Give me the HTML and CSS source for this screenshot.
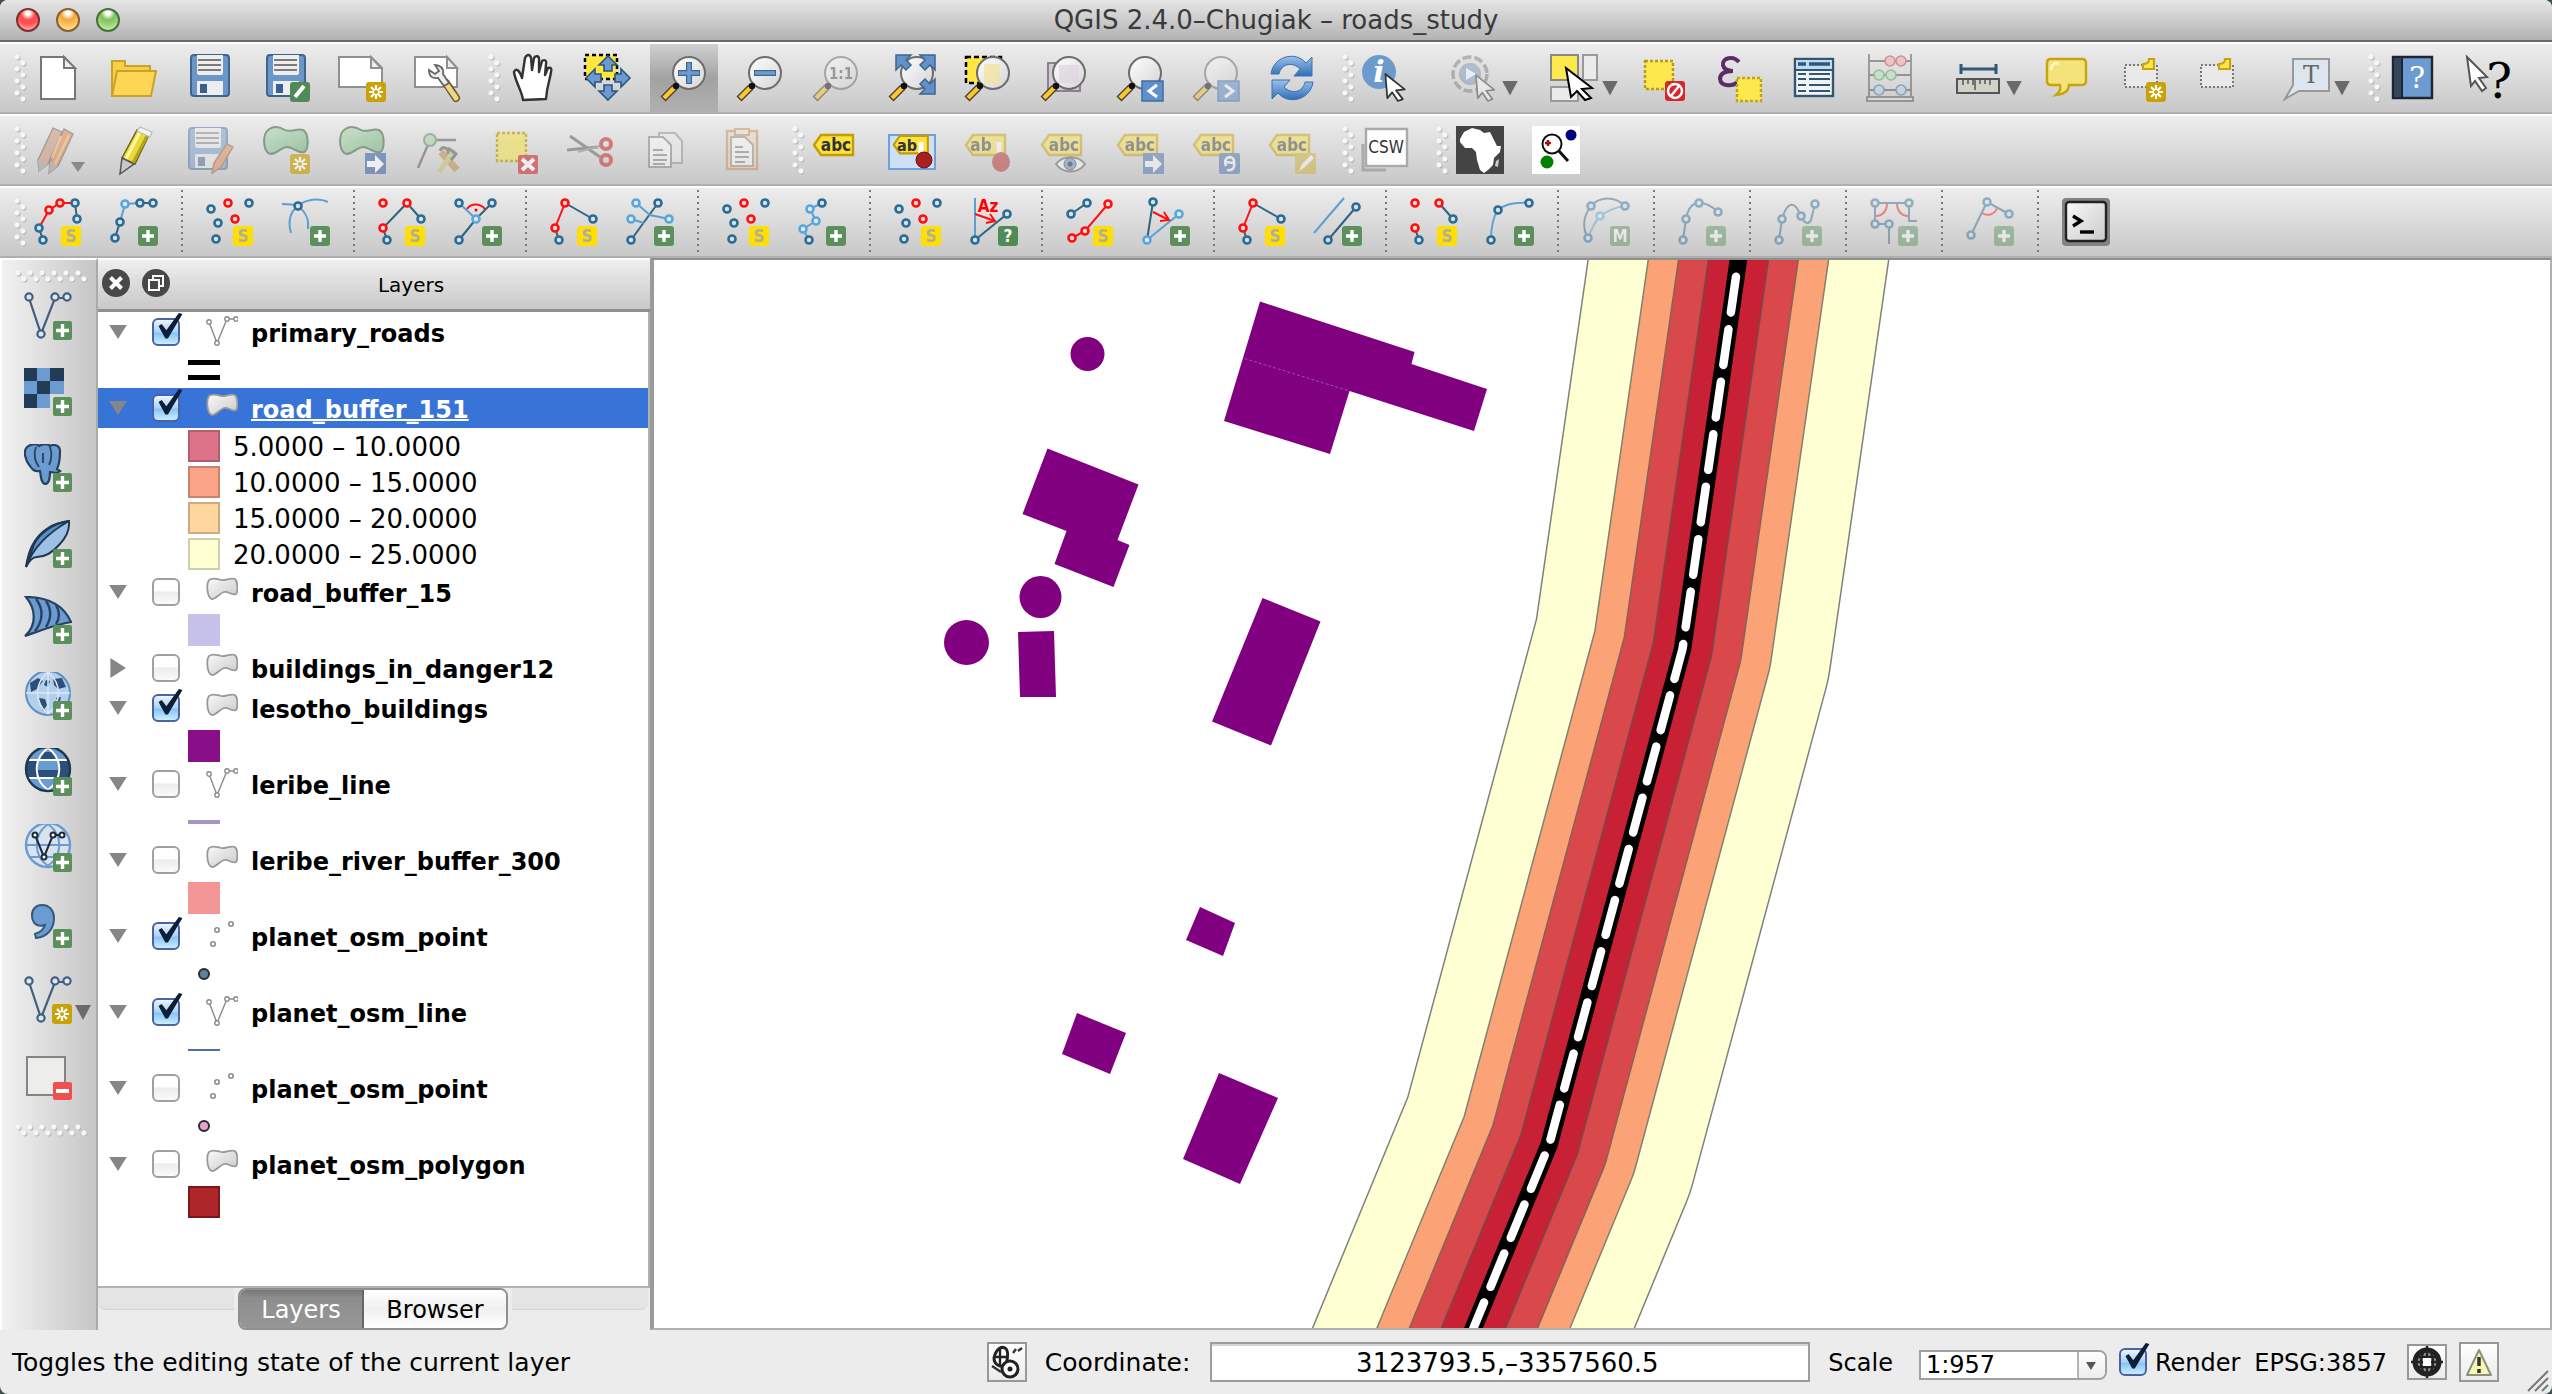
FILE: index.html
```html
<!DOCTYPE html>
<html lang="en">
<head>
<meta charset="utf-8">
<title>QGIS 2.4.0-Chugiak – roads_study</title>
<link rel="stylesheet" href="styles.css">
</head>
<body>
<svg class="defs" aria-hidden="true">
  <defs>
    <linearGradient id="lens" x1="0" y1="0" x2="1" y2="1"><stop offset="0" stop-color="#fff"/><stop offset="1" stop-color="#d4d4d4"/></linearGradient>
    <linearGradient id="steel" x1="0" y1="0" x2="1" y2="1"><stop offset="0" stop-color="#fafafa"/><stop offset="1" stop-color="#c9c9c9"/></linearGradient>
    <linearGradient id="swirl" x1="0" y1="0" x2="0" y2="1"><stop offset="0" stop-color="#9cc0ea"/><stop offset="1" stop-color="#2f6fb8"/></linearGradient>
    <linearGradient id="leaf" x1="0" y1="0" x2="1" y2="1"><stop offset="0" stop-color="#b9deb9"/><stop offset="1" stop-color="#7fb58a"/></linearGradient>
  </defs>
  <symbol id="plus" viewBox="0 0 48 48"><rect x="28" y="28" width="20" height="20" rx="3" fill="#5b8f5b"/><path d="M38 32v12M32 38h12" stroke="#fff" stroke-width="3.400"/></symbol>
  <symbol id="sbadge" viewBox="0 0 48 48"><rect x="27" y="28" width="20" height="20" rx="3" fill="#ffdf00"/></symbol>
  <symbol id="star" viewBox="0 0 48 48"><rect x="28" y="28" width="20" height="20" rx="3" fill="#c9a208"/><path d="M38 31v14M31 38h14M33 33l10 10M43 33l-10 10" stroke="#fff" stroke-width="2.200"/><circle cx="38" cy="38" r="2" fill="#c9a208"/></symbol>
  <symbol id="mag" viewBox="0 0 48 48"><path d="M15 33L3 45" stroke="#4a4030" stroke-width="7"/><path d="M14 34L4 44" stroke="#fcc62d" stroke-width="4.500"/><circle cx="29" cy="19" r="16" fill="url(#lens)" stroke="#6d6d6d" stroke-width="2"/><circle cx="16" cy="32" r="3.200" fill="#111"/></symbol>
  <symbol id="cursor" viewBox="0 0 26 30"><path d="M1 1l20 16-9 1 7 9-5 2-6-9-5 6z" fill="#fff" stroke="#333" stroke-width="1.800" stroke-linejoin="round"/></symbol>
  <symbol id="disk" viewBox="0 0 48 48"><rect x="5" y="1" width="38" height="41" rx="3" fill="#6b96c8" stroke="#3e658f" stroke-width="2"/><path d="M11 1h26v18a2 2 0 0 1-2 2H13a2 2 0 0 1-2-2z" fill="#eee"/><path d="M12 6h23M12 11h23M12 16h23" stroke="#555" stroke-width="1.600"/><rect x="11" y="27" width="26" height="14" fill="#eee"/><rect x="14" y="30" width="7" height="9" fill="#3b5f94"/></symbol>
  <symbol id="tag" viewBox="0 0 48 48"><path d="M2 19L9 9h32v20H9z" fill="#fbe23f" stroke="#c39c00" stroke-width="2.400"/></symbol>
  <symbol id="lump" viewBox="0 0 48 48"><path d="M5 5C11-1 18 1 23 4s12-2 18 0c6 3 6 20 1 22s-11-5-17-5S12 31 6 27C1 22 1 10 5 5z" fill="url(#leaf)" stroke="#55775a" stroke-width="2"/></symbol>
  <symbol id="scatter" viewBox="0 0 48 48"><g class="node"><circle cx="5" cy="11" r="3.500"/><circle cx="43" cy="5" r="3.500"/><circle cx="12" cy="25" r="3.500"/><circle cx="10" cy="41" r="3.500"/></g><g class="node red"><circle cx="22" cy="5" r="3.500"/><circle cx="29" cy="21" r="3.500"/></g><use href="#sbadge"/></symbol>
  <symbol id="trim" viewBox="0 0 48 48"><path class="ln" d="M15 5l28 16M5 30l4 12"/><path class="ln lred" d="M15 5L5 30"/><g class="node"><circle cx="43" cy="21" r="3.500"/><circle cx="9" cy="42" r="3.500"/></g><g class="node red"><circle cx="15" cy="5" r="3.500"/><circle cx="5" cy="30" r="3.500"/></g><use href="#sbadge"/></symbol>
  <symbol id="vee" viewBox="0 0 48 48"><g fill="#dfe8f2" stroke="#41607f" stroke-width="2.200"><path d="M5 6l12 36L31 6h12" fill="none"/><circle cx="5" cy="5" r="3.600"/><circle cx="31" cy="5" r="3.600"/><circle cx="43" cy="5" r="3.600"/><circle cx="17" cy="42" r="3.600"/></g></symbol>
  <symbol id="t-line" viewBox="0 0 32 34"><g fill="#fff" stroke="#8d8d87" stroke-width="1.400"><path d="M3 7l8 21L21 4h8" fill="none"/><circle cx="3" cy="7" r="2.200"/><circle cx="21" cy="4" r="2.200"/><circle cx="30" cy="4" r="2.200"/><circle cx="11" cy="28" r="2.200"/></g></symbol>
  <symbol id="t-poly" viewBox="0 0 32 34"><path d="M3 5c4-3 8-1 12 0s10-3 14-1c3 3 3 13 1 15-3 2-8-3-12-2s-8 7-12 7C1 23 0 9 3 5z" fill="url(#steel)" stroke="#999" stroke-width="1.800"/></symbol>
  <symbol id="t-point" viewBox="0 0 32 34"><g fill="#fff" stroke="#8d8d87" stroke-width="1.600"><circle cx="25" cy="5" r="2.200"/><circle cx="11" cy="11" r="2.200"/><circle cx="7" cy="25" r="2.200"/></g></symbol>
  <symbol id="gbadge" viewBox="0 0 48 48"><rect x="29" y="29" width="19" height="19" rx="2" fill="#5b8f5b"/><path d="M38.500 32v13M32 38.500h13" stroke="#fff" stroke-width="3.400"/></symbol>
</svg>

<div class="window">
  <header class="titlebar">
    <div class="lights"><button class="light close" aria-label="Close"></button><button class="light mini" aria-label="Minimize"></button><button class="light full" aria-label="Zoom"></button></div>
    <h1>QGIS 2.4.0–Chugiak – roads_study</h1>
  </header>

  <div class="toolbar" role="toolbar" aria-label="File and navigation">
    <i class="grip"></i>
    <button aria-label="New"><svg viewBox="0 0 48 48"><path d="M7 3h23l11 12v30H7z" fill="#fff" stroke="#777" stroke-width="2"/><path d="M30 3v11h11z" fill="#eee" stroke="#777" stroke-width="2"/></svg></button>
    <button aria-label="Open"><svg viewBox="0 0 48 48"><path d="M2 41V7h13v5h25v8" fill="#f5cf45" stroke="#c9a22c" stroke-width="2"/><path d="M7 17h39l-5 25H2z" fill="#fdd754" stroke="#c9a22c" stroke-width="2"/></svg></button>
    <button aria-label="Save"><svg viewBox="0 0 48 48"><use href="#disk"/></svg></button>
    <button aria-label="Save as"><svg viewBox="0 0 48 48"><use href="#disk"/><rect x="28" y="28" width="20" height="20" rx="3" fill="#4f8a57"/><path d="M33 43l9-11" stroke="#fff" stroke-width="4"/></svg></button>
    <button aria-label="New composer"><svg viewBox="0 0 48 48"><path d="M1 3h32l11 11v19H1z" fill="#fff" stroke="#909090" stroke-width="2"/><path d="M33 3v11h10z" fill="#eee" stroke="#909090" stroke-width="2"/><use href="#star"/></svg></button>
    <button aria-label="Composer manager"><svg viewBox="0 0 48 48"><path d="M1 3h32l10 11v19H1z" fill="#fff" stroke="#909090" stroke-width="2"/><path d="M33 3v11h10z" fill="#eee" stroke="#909090" stroke-width="2"/><path d="M32 29l10 15" stroke="#6b5724" stroke-width="8" stroke-linecap="round"/><path d="M33 31l9 13" stroke="#ecd68b" stroke-width="5" stroke-linecap="round"/><path d="M21 11c5 0 9 3 8 9l6 9-5 3-6-8c-6 1-9-2-9-8l6 4 4-3z" fill="#eee" stroke="#666" stroke-width="1.800"/></svg></button>
    <i class="grip"></i>
    <button aria-label="Pan map"><svg viewBox="0 0 48 48"><path d="M15 46C14 37 7 27 6 18c2-5 6-1 8 6L17 4c2-4 5-4 6 0l1 12 2-12c2-3 5-2 5 1v13l3-11c3-2 5 0 4 3l-1 11 3-7c3-1 4 1 3 4-1 8-4 13-5 27z" fill="#fff" stroke="#333" stroke-width="2.400" stroke-linejoin="round"/></svg></button>
    <button aria-label="Pan to selection"><svg viewBox="0 0 48 48"><rect x="1" y="1" width="32" height="24" fill="#ffe742" stroke="#000" stroke-width="2.500" stroke-dasharray="4 3"/><g fill="#6b9bd0" stroke="#2d5580" stroke-width="1.600"><path d="M24 2l9 9h-5v6h-8v-6h-5z"/><path d="M24 46l9-9h-5v-6h-8v6h-5z"/><path d="M2 24l9-9v5h6v8h-6v5z"/><path d="M46 24l-9-9v5h-6v8h6v5z"/></g></svg></button>
    <button class="pressed" aria-label="Zoom in" aria-pressed="true"><svg viewBox="0 0 48 48"><use href="#mag"/><path d="M29 8v22M18 19h22" stroke="#3d6590" stroke-width="6"/><path d="M29 9v20M19 19h20" stroke="#6b9bd0" stroke-width="3.600"/></svg></button>
    <button aria-label="Zoom out"><svg viewBox="0 0 48 48"><use href="#mag"/><path d="M18 19h22" stroke="#3d6590" stroke-width="6"/><path d="M19 19h20" stroke="#6b9bd0" stroke-width="3.600"/></svg></button>
    <button disabled aria-label="Zoom to native resolution"><svg viewBox="0 0 48 48"><use href="#mag"/><text x="29" y="25" class="glyph" font-size="15" fill="#555">1:1</text></svg></button>
    <button aria-label="Zoom full"><svg viewBox="0 0 48 48"><use href="#mag"/><g fill="#6492c8" stroke="#3d6590" stroke-width="1.500"><path d="M8 1h15l-5 5 5 5-5 5-5-5-5 5z"/><path d="M47 1v15l-5-5-5 5-5-5 5-5-5-5z"/><path d="M47 40H32l5-5-5-5 5-5 5 5 5-5z"/></g></svg></button>
    <button aria-label="Zoom to selection"><svg viewBox="0 0 48 48"><rect x="2" y="3" width="35" height="26" fill="#ffe742" stroke="#000" stroke-width="2.500" stroke-dasharray="5 3"/><use href="#mag"/><path d="M20 10h16v20H20z" fill="#f1e49a" opacity=".7"/></svg></button>
    <button aria-label="Zoom to layer"><svg viewBox="0 0 48 48"><rect x="8" y="9" width="32" height="28" fill="#d5c9d6" stroke="#8d7f8f" stroke-width="2"/><use href="#mag"/><path d="M19 11h20v18H19z" fill="#ddd6de" opacity=".7"/></svg></button>
    <button aria-label="Zoom last"><svg viewBox="0 0 48 48"><use href="#mag"/><rect x="26" y="27" width="21" height="20" fill="#5f90ca" stroke="#3f6da5" stroke-width="1.500"/><path d="M41 31l-8 6 8 6" fill="none" stroke="#fff" stroke-width="3"/></svg></button>
    <button disabled aria-label="Zoom next"><svg viewBox="0 0 48 48"><use href="#mag"/><rect x="26" y="27" width="21" height="20" fill="#5f90ca" stroke="#3f6da5" stroke-width="1.500"/><path d="M33 31l8 6-8 6" fill="none" stroke="#fff" stroke-width="3"/></svg></button>
    <button aria-label="Refresh"><svg viewBox="0 0 48 48"><g fill="url(#swirl)" stroke="#3a70b0" stroke-width="1"><path d="M3 20C5 3 27-4 38 9l6-6v19H26l6-7C24 7 13 10 11 20z"/><path d="M45 28C43 45 21 52 10 39l-6 6V26h18l-6 7c8 8 19 5 21-5z"/></g></svg></button>
    <i class="grip"></i>
    <button aria-label="Identify"><svg viewBox="0 0 48 48"><circle cx="17" cy="18" r="17" fill="#6c9acb"/><text x="17" y="28" class="glyph info" font-size="30" fill="#fff">i</text><use href="#cursor" x="22" y="19" width="26" height="29"/></svg></button>
    <button class="drop off" disabled aria-label="Run feature action"><svg viewBox="0 0 48 48"><circle cx="20" cy="20" r="17" fill="#ddd" stroke="#777" stroke-width="3.500" stroke-dasharray="9 3"/><circle cx="20" cy="20" r="10" fill="#6c9acb" stroke="#888" stroke-width="2"/><path d="M16 14l10 6-10 6z" fill="#fff"/><use href="#cursor" x="25" y="20" width="24" height="28"/></svg><b class="arrow"></b></button>
    <button class="drop" aria-label="Select features"><svg viewBox="0 0 48 48"><rect x="1" y="1" width="27" height="25" fill="#fde84e" stroke="#888" stroke-width="2"/><path d="M33 1h14v25H33zM1 33h27v14H1z" fill="#ebebeb" stroke="#999" stroke-width="2"/><path d="M16 14l26 20-10 1 9 9-6 2-8-9-6 6z" fill="#fff" stroke="#000" stroke-width="2"/></svg><b class="arrow"></b></button>
    <button aria-label="Deselect features"><svg viewBox="0 0 48 48"><rect x="7" y="7" width="28" height="28" fill="#fde84e" stroke="#b99a10" stroke-width="2.400" stroke-dasharray="3 2"/><rect x="27" y="27" width="20" height="20" rx="3" fill="#d8242a"/><circle cx="37" cy="37" r="7" fill="none" stroke="#fff" stroke-width="2.500"/><path d="M41 32l-8 10" stroke="#fff" stroke-width="2.500"/></svg></button>
    <button aria-label="Select by expression"><svg viewBox="0 0 48 48"><path d="M25 8C19 1 8 4 9 11c1 5 6 6 10 6C12 17 6 19 6 25c1 8 13 8 19 2" fill="none" stroke="#5b2d68" stroke-width="4"/><rect x="23" y="24" width="24" height="23" fill="#fde84e" stroke="#c2a216" stroke-width="2.400" stroke-dasharray="3 2"/></svg></button>
    <button aria-label="Open attribute table"><svg viewBox="0 0 48 48"><rect x="5" y="5" width="38" height="37" fill="#f0f4f7" stroke="#34566f" stroke-width="2.400"/><rect x="6" y="6" width="36" height="9" fill="#b8dcfa"/><path d="M5 16h38" stroke="#34566f" stroke-width="2"/><path d="M8 10h8M19 10h21" stroke="#34566f" stroke-width="3.500"/><path d="M8 20h8M19 20h21M8 25h8M19 25h21M8 31h8M19 31h21M8 37h8M19 37h21" stroke="#34566f" stroke-width="2"/></svg></button>
    <button class="soft" aria-label="Field calculator"><svg viewBox="0 0 48 48"><g fill="none" stroke="#6d6d6d" stroke-width="1.800"><path d="M3 0v43M45 0v43M3 7h42M3 21h42M3 36h42"/><rect x="1" y="43" width="46" height="4" fill="#ddd"/></g><g stroke="#c86464" fill="#edb5b5" stroke-width="1.600"><circle cx="24" cy="7" r="5"/><circle cx="35" cy="7" r="5"/></g><g stroke="#6fae77" fill="#bfe0c2" stroke-width="1.600"><circle cx="13" cy="21" r="5"/><circle cx="25" cy="21" r="5"/></g><g stroke="#5f87ab" fill="#bdd3e6" stroke-width="1.600"><circle cx="13" cy="36" r="5"/><circle cx="35" cy="36" r="5"/></g></svg></button>
    <button class="drop" aria-label="Measure"><svg viewBox="0 0 48 48"><path d="M7 15h35M7 10v10M42 10v10" stroke="#2f5876" stroke-width="3"/><rect x="3" y="25" width="42" height="14" fill="#d0d4c8" stroke="#555" stroke-width="2"/><path d="M9 25v6M14 25v5M19 25v6M26 25v5M31 25v5M36 25v6M21 25v11" stroke="#555" stroke-width="1.500"/></svg><b class="arrow"></b></button>
    <button aria-label="Map tips"><svg viewBox="0 0 48 48"><path d="M8 5h32c3 0 4 2 4 4v18c0 3-1 4-4 4H27c0 5-4 9-13 10 4-3 5-6 4-10H9c-3 0-4-1-4-4V9c0-3 1-4 3-4z" fill="#f4e37a" stroke="#c7a40c" stroke-width="2.400"/><path d="M9 16c0-5 2-7 8-7" stroke="#fdf6c5" stroke-width="3" fill="none"/></svg></button>
    <button aria-label="New bookmark"><svg viewBox="0 0 48 48"><rect x="7" y="11" width="32" height="22" fill="#e9e9e9" stroke="#777" stroke-width="2" stroke-dasharray="2 2"/><path d="M31 5h5v10H25v-5c4 0 6-1 6-5z" fill="#fde84e" stroke="#c7a40c" stroke-width="2.200"/><use href="#star"/></svg></button>
    <button aria-label="Show bookmarks"><svg viewBox="0 0 48 48"><rect x="7" y="11" width="32" height="22" fill="#e9e9e9" stroke="#777" stroke-width="2" stroke-dasharray="2 2"/><path d="M31 5h5v10H25v-5c4 0 6-1 6-5z" fill="#fde84e" stroke="#c7a40c" stroke-width="2.200"/></svg></button>
    <button class="drop" aria-label="Text annotation"><svg viewBox="0 0 48 48"><path d="M11 5h36v32H17L3 45l8-14z" fill="#dde6ee" stroke="#999" stroke-width="2"/><text x="29" y="29" class="glyph serif" font-size="24" fill="#666">T</text></svg><b class="arrow"></b></button>
    <i class="grip"></i>
    <button aria-label="Help"><svg viewBox="0 0 48 48"><path d="M5 3h39v41H5z" fill="#6b9bd0" stroke="#1d2630" stroke-width="2.400"/><path d="M5 3h9v41H5z" fill="#34465a" stroke="#1d2630" stroke-width="2"/><text x="29" y="34" class="glyph serif" font-size="30" fill="#fff">?</text></svg></button>
    <button aria-label="What's this"><svg viewBox="0 0 48 48"><path d="M3 3l20 20-8 1 7 10-4 3-7-10-4 5z" fill="#fff" stroke="#555" stroke-width="2"/><text x="35" y="44" class="glyph serif" font-size="48" fill="#000">?</text></svg></button>
  </div>

  <div class="toolbar" role="toolbar" aria-label="Digitizing and labels">
    <i class="grip"></i>
    <button class="corner off" disabled aria-label="Current edits"><svg viewBox="0 0 48 48"><g stroke="#5b4636" stroke-width="1.300"><path d="M4 34L19 2l9 4-14 32-9 7z" fill="#c98a68"/><path d="M16 36L30 3l9 5-15 32-9 7z" fill="#e2703f"/></g><path d="M27 10l-9 22M35 9L21 38" stroke="#f0b24e" stroke-width="2.500"/><path d="M4 34l10 4-9 8zM16 36l8 4-9 7z" fill="#999"/></svg><b class="arrow small"></b></button>
    <button aria-label="Toggle editing"><svg viewBox="0 0 48 48"><path d="M12 32L27 4l12 5-14 29z" fill="#e9da3c" stroke="#6b651b" stroke-width="1.500"/><path d="M30 6L16 33" stroke="#fff7a0" stroke-width="3"/><path d="M37 10L23 37" stroke="#b3a51c" stroke-width="3"/><path d="M12 32l12 6-14 10z" fill="#c9c9c9" stroke="#555" stroke-width="1.500"/><path d="M27 5l3-4 12 5-2 5z" fill="#f4f4f4" stroke="#bbb" stroke-width="1.200"/></svg></button>
    <button class="off" disabled aria-label="Save layer edits"><svg viewBox="0 0 48 48"><use href="#disk" x="-2" y="1"/><path d="M28 37l13-19 6 3-12 20-9 6z" fill="#e8854a" stroke="#8a5a3a" stroke-width="1.500"/></svg></button>
    <button class="soft" disabled aria-label="Add feature"><svg viewBox="0 0 48 48"><use href="#lump"/><use href="#star"/></svg></button>
    <button class="soft" disabled aria-label="Move feature"><svg viewBox="0 0 48 48"><use href="#lump"/><rect x="27" y="27" width="21" height="21" fill="#4f74ad"/><path d="M29 35h8v-6l9 9-9 9v-6h-8z" fill="#fff"/></svg></button>
    <button class="off" disabled aria-label="Node tool"><svg viewBox="0 0 48 48"><path d="M4 42L16 14h26" fill="none" stroke="#444" stroke-width="2.400"/><circle cx="16" cy="14" r="6" fill="#9fce9f" stroke="#4a7a4a" stroke-width="2"/><path d="M27 26L43 44" stroke="#c08030" stroke-width="7"/><path d="M41 24L25 46" stroke="#c9c058" stroke-width="5"/><path d="M26 25c3-6 9-3 8 3M34 22l8 6-5 6" fill="none" stroke="#444" stroke-width="3"/></svg></button>
    <button class="soft" disabled aria-label="Delete selected"><svg viewBox="0 0 48 48"><rect x="7" y="7" width="29" height="28" fill="#f3e263" stroke="#b99a10" stroke-width="2.400" stroke-dasharray="3 2"/><rect x="28" y="29" width="20" height="19" rx="2" fill="#d03c40"/><path d="M32 33l12 11M44 33L32 44" stroke="#fff" stroke-width="4"/></svg></button>
    <button class="soft" disabled aria-label="Cut"><svg viewBox="0 0 48 48"><path d="M4 10l30 21M1 24l31-3" stroke="#777" stroke-width="3"/><path d="M12 26l22-6" stroke="#999" stroke-width="2"/><g fill="none" stroke="#c84848" stroke-width="4"><circle cx="40" cy="18" r="5"/><circle cx="40" cy="34" r="5"/></g></svg></button>
    <button class="off" disabled aria-label="Copy"><svg viewBox="0 0 48 48"><path d="M17 7h16l7 8v22H17z" fill="#eee" stroke="#888" stroke-width="2"/><path d="M7 11h14l8 8v22H7z" fill="#fff" stroke="#777" stroke-width="2"/><path d="M11 24h10M11 29h14M11 34h14M11 38h12" stroke="#777" stroke-width="2"/></svg></button>
    <button class="off" disabled aria-label="Paste"><svg viewBox="0 0 48 48"><rect x="9" y="5" width="30" height="38" fill="#f0d8b8" stroke="#c08848" stroke-width="2.400"/><path d="M13 11h14l8 8v21H13z" fill="#fff" stroke="#888" stroke-width="2"/><path d="M17 21h8M17 26h14M17 31h14M17 36h10" stroke="#777" stroke-width="2"/><rect x="17" y="3" width="14" height="6" fill="#f4e4cc" stroke="#c08848" stroke-width="2"/></svg></button>
    <i class="grip"></i>
    <button aria-label="Label layer"><svg viewBox="0 0 48 48"><use href="#tag"/><text x="24" y="25" class="glyph" font-size="17" fill="#333">abc</text></svg></button>
    <button aria-label="Highlight pinned labels"><svg viewBox="0 0 48 48"><rect x="1" y="9" width="46" height="34" fill="#cfe0f5" stroke="#6f9fdd" stroke-width="2"/><use href="#tag" x="4" y="2" width="42" height="42"/><text x="19" y="25" class="glyph" font-size="16" fill="#333">ab</text><path d="M33 16v12" stroke="#fff" stroke-width="5"/><circle cx="36" cy="34" r="8" fill="#a8201f" stroke="#701010"/></svg></button>
    <button class="off" disabled aria-label="Pin labels"><svg viewBox="0 0 48 48"><use href="#tag"/><text x="17" y="25" class="glyph" font-size="17" fill="#333">ab</text><path d="M35 16v12" stroke="#fff" stroke-width="5"/><ellipse cx="37" cy="36" rx="9" ry="10" fill="#b82020"/></svg></button>
    <button class="off" disabled aria-label="Show labels"><svg viewBox="0 0 48 48"><use href="#tag"/><text x="24" y="25" class="glyph" font-size="17" fill="#333">abc</text><path d="M16 38c7-9 22-9 29 0-7 10-22 10-29 0z" fill="#fff" stroke="#555" stroke-width="2"/><circle cx="30" cy="38" r="6" fill="#5f90ca" stroke="#333"/><circle cx="30" cy="38" r="2.500" fill="#111"/></svg></button>
    <button class="off" disabled aria-label="Move label"><svg viewBox="0 0 48 48"><use href="#tag"/><text x="24" y="25" class="glyph" font-size="17" fill="#333">abc</text><rect x="27" y="27" width="21" height="21" fill="#3e69ad"/><path d="M29 35h8v-6l9 9-9 9v-6h-8z" fill="#fff"/></svg></button>
    <button class="off" disabled aria-label="Rotate label"><svg viewBox="0 0 48 48"><use href="#tag"/><text x="24" y="25" class="glyph" font-size="17" fill="#333">abc</text><rect x="27" y="27" width="21" height="21" rx="2" fill="#3e69ad"/><path d="M34 40c-4-9 7-12 8-5s-1 10-7 9M34 36l7 1" fill="none" stroke="#fff" stroke-width="2.600"/></svg></button>
    <button class="off" disabled aria-label="Change label"><svg viewBox="0 0 48 48"><use href="#tag"/><text x="24" y="25" class="glyph" font-size="17" fill="#333">abc</text><rect x="27" y="27" width="21" height="21" fill="#cfb02b"/><path d="M31 45l3-7 9-9 3 3-9 9z" fill="#fff"/></svg></button>
    <i class="grip"></i>
    <button aria-label="Catalogue search"><svg viewBox="0 0 48 48"><path d="M1 18v26h23" fill="none" stroke="#aaa" stroke-width="3"/><rect x="4" y="3" width="41" height="37" fill="#fff" stroke="#aaa" stroke-width="2.400"/><text x="24" y="27" class="glyph thin" font-size="17" fill="#333">CSW</text></svg></button>
    <i class="grip"></i>
    <button aria-label="OpenStreetMap Africa"><svg viewBox="0 0 48 48"><path fill="#444" d="M0 0h48v48H0z"/><path d="M8 6l8-4 8 2 4 3 6-1 4 8 3 6h4l-1 6-6 6-1 7-5 5-4 3-4-3-3-10-1-8-4-4H9l-5-6V13z" fill="#fff"/><path d="M43 33l-1 8-3-1 1-5z" fill="#ccc"/></svg></button>
    <button aria-label="Road graph"><svg viewBox="0 0 48 48"><path fill="#fff" d="M0 0h48v48H0z"/><circle cx="20" cy="18" r="9.500" fill="#fff" stroke="#111" stroke-width="2"/><path d="M27 25l9 10" stroke="#111" stroke-width="3"/><path d="M16 14v6M13 17h6" stroke="#a01010" stroke-width="2.500"/><circle cx="39" cy="9" r="5.500" fill="#000080"/><circle cx="15" cy="36" r="6.500" fill="#008000"/></svg></button>
  </div>

  <div class="toolbar last" role="toolbar" aria-label="CAD tools">
    <i class="grip"></i>
    <button aria-label="Select arc"><svg viewBox="0 0 48 48"><path class="ln" d="M5 30l4 12M41 5l2 16"/><path class="ln lred" d="M5 30l10-18L26 5h15"/><g class="node"><circle cx="5" cy="30" r="3.500"/><circle cx="9" cy="42" r="3.500"/><circle cx="41" cy="5" r="3.500"/><circle cx="43" cy="21" r="3.500"/></g><g class="node red"><circle cx="15" cy="12" r="3.500"/><circle cx="26" cy="5" r="3.500"/></g><use href="#sbadge"/><text x="37" y="44" class="glyph ess">S</text></svg></button>
    <button aria-label="Extend line"><svg viewBox="0 0 48 48"><path class="ln" d="M5 40l5-16M30 5h13"/><path class="ln llt" d="M10 24l5-18 15-1"/><g class="node"><circle cx="5" cy="40" r="3.500"/><circle cx="10" cy="24" r="3.500"/><circle cx="30" cy="5" r="3.500"/><circle cx="43" cy="5" r="3.500"/></g><g class="node lt"><circle cx="15" cy="6" r="3.500"/></g><use href="#plus"/></svg></button>
    <i class="sep"></i>
    <button aria-label="Select points"><svg viewBox="0 0 48 48"><use href="#scatter"/><text x="37" y="44" class="glyph ess">S</text></svg></button>
    <button aria-label="Intersection"><svg viewBox="0 0 48 48"><path class="ln llt" d="M0 6l16 1C24 2 36-1 46 4M16 8C8 14 6 24 9 35M16 8c9 7 11 14 10 23"/><g class="node"><circle cx="16" cy="8" r="3.500"/></g><use href="#plus"/></svg></button>
    <i class="sep"></i>
    <button aria-label="Select vertices"><svg viewBox="0 0 48 48"><path class="ln" d="M43 21L29 5 5 30l4 12"/><g class="node"><circle cx="43" cy="21" r="3.500"/><circle cx="9" cy="42" r="3.500"/></g><g class="node red"><circle cx="5" cy="5" r="3.500"/><circle cx="29" cy="5" r="3.500"/><circle cx="5" cy="30" r="3.500"/></g><use href="#sbadge"/><text x="37" y="44" class="glyph ess">S</text></svg></button>
    <button aria-label="Bisector"><svg viewBox="0 0 48 48"><path class="ln" d="M38 5L22 21 5 42"/><path class="ln llt" d="M5 5l17 16"/><path class="ln lred" d="M13 11c4-6 13-6 18 0"/><circle cx="22" cy="12" r="1.500" fill="red"/><g class="node"><circle cx="5" cy="5" r="3.500"/><circle cx="38" cy="5" r="3.500"/><circle cx="5" cy="42" r="3.500"/></g><g class="node lt"><circle cx="22" cy="21" r="3.500"/></g><use href="#plus"/></svg></button>
    <i class="sep"></i>
    <button aria-label="Select segment"><svg viewBox="0 0 48 48"><use href="#trim"/><text x="37" y="44" class="glyph ess">S</text></svg></button>
    <button aria-label="Perpendicular"><svg viewBox="0 0 48 48"><path class="ln" d="M5 42L32 5"/><path class="ln llt" d="M10 5l14 12 19 4M5 21l13 4"/><g class="node"><circle cx="32" cy="5" r="3.500"/><circle cx="5" cy="42" r="3.500"/></g><g class="node lt"><circle cx="10" cy="5" r="3.500"/><circle cx="5" cy="21" r="3.500"/><circle cx="43" cy="21" r="3.500"/></g><use href="#plus"/></svg></button>
    <i class="sep"></i>
    <button aria-label="Select points"><svg viewBox="0 0 48 48"><use href="#scatter"/><text x="37" y="44" class="glyph ess">S</text></svg></button>
    <button aria-label="Traverse"><svg viewBox="0 0 48 48"><path class="ln llt" d="M24 5l-12 6 6 12-13 8 6 11"/><g class="node"><circle cx="24" cy="5" r="3.500"/><circle cx="11" cy="42" r="3.500"/></g><g class="node lt"><circle cx="12" cy="11" r="3.500"/><circle cx="18" cy="23" r="3.500"/><circle cx="5" cy="31" r="3.500"/></g><use href="#plus"/></svg></button>
    <i class="sep"></i>
    <button aria-label="Select points"><svg viewBox="0 0 48 48"><use href="#scatter"/><text x="37" y="44" class="glyph ess">S</text></svg></button>
    <button aria-label="Azimuth"><svg viewBox="0 0 48 48"><path class="ln llt" d="M5 0v42"/><path class="ln" d="M5 42l32-26"/><g class="node"><circle cx="5" cy="42" r="3.500"/><circle cx="37" cy="16" r="3.500"/></g><path class="ln lred" d="M5 16l20 7M20 16l5 7-9 2"/><text x="18" y="14" class="glyph" font-size="17" fill="red">Az</text><rect x="28" y="28" width="20" height="20" rx="3" fill="#4f8a57"/><text x="38" y="44" class="glyph" font-size="17" fill="#fff">?</text></svg></button>
    <i class="sep"></i>
    <button aria-label="Select two segments"><svg viewBox="0 0 48 48"><path class="ln" d="M21 5L5 16"/><path class="ln lred" d="M42 6L19 33 6 40"/><g class="node"><circle cx="21" cy="5" r="3.500"/><circle cx="5" cy="16" r="3.500"/></g><g class="node red"><circle cx="42" cy="6" r="3.500"/><circle cx="19" cy="33" r="3.500"/><circle cx="6" cy="40" r="3.500"/></g><use href="#sbadge"/><text x="37" y="44" class="glyph ess">S</text></svg></button>
    <button aria-label="Rotate"><svg viewBox="0 0 48 48"><path class="ln" d="M11 4L5 42"/><path class="ln llt" d="M5 42l32-26"/><g class="node"><circle cx="11" cy="4" r="3.500"/></g><g class="node lt"><circle cx="5" cy="42" r="3.500"/><circle cx="37" cy="16" r="3.500"/></g><path class="ln lred" d="M11 14l16 8M22 14l5 8-9 1"/><use href="#plus"/></svg></button>
    <i class="sep"></i>
    <button aria-label="Select segment"><svg viewBox="0 0 48 48"><use href="#trim"/><text x="37" y="44" class="glyph ess">S</text></svg></button>
    <button aria-label="Parallel"><svg viewBox="0 0 48 48"><path class="ln llt" d="M30 0L0 35"/><path class="ln" d="M42 9L14 42"/><g class="node"><circle cx="42" cy="9" r="3.500"/><circle cx="14" cy="42" r="3.500"/></g><use href="#plus"/></svg></button>
    <i class="sep"></i>
    <button aria-label="Select three points"><svg viewBox="0 0 48 48"><path class="ln" d="M29 5l14 16M5 30l4 12"/><g class="node"><circle cx="43" cy="21" r="3.500"/><circle cx="9" cy="42" r="3.500"/></g><g class="node red"><circle cx="5" cy="5" r="3.500"/><circle cx="29" cy="5" r="3.500"/><circle cx="5" cy="30" r="3.500"/></g><use href="#sbadge"/><text x="37" y="44" class="glyph ess">S</text></svg></button>
    <button aria-label="Arc"><svg viewBox="0 0 48 48"><path class="ln llt" d="M5 42c0-12 2-23 7-30C19 6 30 4 43 5"/><g class="node"><circle cx="43" cy="5" r="3.500"/><circle cx="12" cy="12" r="3.500"/><circle cx="5" cy="42" r="3.500"/></g><use href="#plus"/></svg></button>
    <i class="sep"></i>
    <button class="off" disabled aria-label="Modify circle"><svg viewBox="0 0 48 48"><path class="ln" d="M6 40C0 30 1 18 9 8 18-2 33-2 43 8"/><path class="ln llt" d="M6 40c3-8 7-16 12-22 7-5 15-9 25-10"/><g class="node"><circle cx="9" cy="8" r="3.500"/><circle cx="43" cy="8" r="3.500"/><circle cx="6" cy="40" r="3.500"/></g><g class="node lt"><circle cx="18" cy="18" r="3.500"/></g><rect x="28" y="28" width="20" height="20" rx="3" fill="#5b8f5b"/><text x="38" y="44" class="glyph" font-size="17" fill="#fff">M</text></svg></button>
    <i class="sep"></i>
    <button class="off" disabled aria-label="Curve"><svg viewBox="0 0 48 48"><path class="ln" d="M5 42l3-21C10 10 14 5 21 5s13 3 19 9"/><g class="node"><circle cx="5" cy="42" r="3.500"/><circle cx="8" cy="21" r="3.500"/><circle cx="21" cy="5" r="3.500"/><circle cx="40" cy="14" r="3.500"/></g><use href="#plus"/></svg></button>
    <i class="sep"></i>
    <button class="off" disabled aria-label="Spline"><svg viewBox="0 0 48 48"><path class="ln" d="M5 42l3-21C11 11 15 6 19 7s6 7 8 11c4 9 8 8 10 4l4-16"/><g class="node"><circle cx="5" cy="42" r="3.500"/><circle cx="8" cy="21" r="3.500"/><circle cx="27" cy="18" r="3.500"/><circle cx="41" cy="6" r="3.500"/></g><use href="#plus"/></svg></button>
    <i class="sep"></i>
    <button class="off" disabled aria-label="Orthogonal"><svg viewBox="0 0 48 48"><path class="ln" d="M19 46V26H5V5h34v18h8"/><path class="ln lred" d="M17 6c0 6-4 12-11 12M27 6c0 6 4 12 11 12"/><g class="node"><circle cx="5" cy="5" r="3.500"/><circle cx="39" cy="5" r="3.500"/><circle cx="5" cy="26" r="3.500"/><circle cx="19" cy="26" r="3.500"/></g><use href="#plus"/></svg></button>
    <i class="sep"></i>
    <button class="off" disabled aria-label="Angle"><svg viewBox="0 0 48 48"><path class="ln" d="M5 37L21 4l22 12"/><path class="ln lred" d="M16 15c6 4 13 1 15-5"/><g class="node"><circle cx="21" cy="4" r="3.500"/><circle cx="43" cy="16" r="3.500"/><circle cx="5" cy="37" r="3.500"/></g><use href="#plus"/></svg></button>
    <i class="sep"></i>
    <button aria-label="Console"><svg viewBox="0 0 48 48"><rect width="48" height="48" rx="4" fill="#83837f"/><rect x="4" y="4" width="40" height="39" rx="3" fill="url(#steel)" stroke="#222" stroke-width="2.400"/><path d="M11 18l8 5-8 5" fill="none" stroke="#000" stroke-width="3.400"/><path d="M18 34h14" stroke="#000" stroke-width="3.400"/></svg></button>
  </div>

  <main>
    <div class="sidebar" role="toolbar" aria-label="Manage layers">
      <i class="grip"></i>
      <button aria-label="Add vector layer"><svg viewBox="0 0 48 48"><use href="#vee"/><use href="#gbadge"/></svg></button>
      <button aria-label="Add raster layer"><svg viewBox="0 0 48 48"><path fill="#6b9bd0" d="M0 0h40v26H26v14H0z"/><path d="M0 0h13v13H0zM26 0h14v13H26zM13 13h13v13H13zM0 26h13v14H0z" fill="#223b59"/><use href="#gbadge"/></svg></button>
      <button aria-label="Add PostGIS layer"><svg viewBox="0 0 48 48"><path d="M3 3c5-4 10-3 12-1 4-3 10-2 11 0 4-2 10-1 10 5 0 7-1 14-3 18l3 2-3 2-7-1c0 7-1 12-5 12-4-1-4-7-5-13-6 1-8-2-10-5C1 16-1 7 3 3z" fill="#6b9bd0" stroke="#274260" stroke-width="2.200"/><path d="M12 3c-3 7-1 15 3 20M26 3c2 6 2 12-1 18M19 9v10" fill="none" stroke="#274260" stroke-width="1.800"/><use href="#gbadge"/></svg></button>
      <button aria-label="Add SpatiaLite layer"><svg viewBox="0 0 48 48"><path d="M2 47C4 34 8 18 24 8 30 4 38 2 45 1c1 10-4 18-10 24-7 8-14 12-22 12-5 0-8 4-11 10z" fill="#9cc0e6" stroke="#1f3852" stroke-width="2"/><path d="M2 47C8 30 22 14 45 1 30 3 12 14 8 30z" fill="#5d8fc4" stroke="#1f3852" stroke-width="2"/><use href="#gbadge"/></svg></button>
      <button aria-label="Add MSSQL layer"><svg viewBox="0 0 48 48"><path d="M2 1c18 0 36 5 45 25-18 3-34 10-46 14 12-11 11-27 1-39z" fill="#6b9bd0" stroke="#274260" stroke-width="2.200"/><path d="M12 3c8 10 7 22-1 32M22 5c6 9 5 18 0 26M32 9c4 7 4 13 0 19" fill="none" stroke="#274260" stroke-width="2.400"/><use href="#gbadge"/></svg></button>
      <button aria-label="Add WMS layer"><svg viewBox="0 0 48 48"><circle cx="24" cy="21" r="22" fill="#b4cfec" stroke="#5d8fc4" stroke-width="2"/><path d="M6 11l8-5 5 3-6 8-6 3zM22 8l4 1-2 6-4-2zM29 7l9-1 4 9-8 2-4-4zM15 26l6 1 2 6-4 6zM32 26l5-1-2 7z" fill="#2c4f79"/><path d="M2 21h44M24 0v42M24 0c-14 12-14 30 0 42M24 0c14 12 14 30 0 42" stroke="#dce9f7" stroke-width="1.500" fill="none"/><use href="#gbadge"/></svg></button>
      <button aria-label="Add WCS layer"><svg viewBox="0 0 48 48"><circle cx="24" cy="21" r="22" fill="#6b9bd0"/><path d="M3 12h11v18H3zM34 12h11v18H34zM14 22h20v8H14zM20 4h8l4 7H16z" fill="#2c4f79"/><path d="M2 30h44M3 12h42M24 0C8 12 10 32 24 42M24 0c16 12 14 32 0 42" stroke="#fff" stroke-width="2" fill="none"/><circle cx="24" cy="21" r="22" fill="none" stroke="#1f3852" stroke-width="2.400"/><use href="#gbadge"/></svg></button>
      <button aria-label="Add WFS layer"><svg viewBox="0 0 48 48"><circle cx="24" cy="21" r="22" fill="#d9e3ee" stroke="#6b9bd0" stroke-width="2.400"/><path d="M2 21h44M6 33h36M24 0C8 12 10 32 24 42M24 0c16 12 14 32 0 42" stroke="#6b9bd0" stroke-width="2" fill="none"/><path d="M11 11l9 22 9-22h9" fill="none" stroke="#1b2a3b" stroke-width="2"/><g fill="#fff" stroke="#1b2a3b" stroke-width="2"><circle cx="11" cy="11" r="2.500"/><circle cx="29" cy="11" r="2.500"/><circle cx="38" cy="11" r="2.500"/><circle cx="20" cy="33" r="2.500"/></g><use href="#gbadge"/></svg></button>
      <button aria-label="Add delimited text layer"><svg viewBox="0 0 48 48"><path d="M18 5c8 0 12 6 12 13 0 10-6 19-18 20l-1-4c6-2 9-5 10-9C12 28 8 22 8 15 8 9 12 5 18 5z" fill="#6b9bd0" stroke="#34597f" stroke-width="2"/><use href="#gbadge"/></svg></button>
      <button class="corner" aria-label="New shapefile layer"><svg viewBox="0 0 48 48"><use href="#vee"/><use href="#star"/></svg><b class="arrow"></b></button>
      <button aria-label="Remove layer"><svg viewBox="0 0 48 48"><rect x="3" y="5" width="38" height="38" fill="#ededeb" stroke="#85857f" stroke-width="2"/><rect x="29" y="30" width="19" height="18" rx="2" fill="#f0504e"/><path d="M32 39h13" stroke="#fff" stroke-width="4"/></svg></button>
      <i class="grip end"></i>
    </div>

    <section class="dock">
      <header>
        <button aria-label="Close panel"><svg viewBox="0 0 28 28"><circle cx="14" cy="14" r="14" fill="#484848"/><path d="M8.500 8.500l11 11M19.500 8.500l-11 11" stroke="#fff" stroke-width="4"/></svg></button>
        <button aria-label="Float panel"><svg viewBox="0 0 28 28"><circle cx="14" cy="14" r="14" fill="#484848"/><path d="M11 11V7h10v10h-4" fill="none" stroke="#fff" stroke-width="2"/><rect x="7" y="11" width="10" height="10" fill="none" stroke="#fff" stroke-width="2"/></svg></button>
        <h2>Layers</h2>
      </header>
      <ul class="tree">
        <li><div class="layer"><button class="open" aria-label="Collapse"></button><input type="checkbox" id="l1" checked><svg viewBox="0 0 32 34"><use href="#t-line"/></svg><label for="l1">primary_roads</label></div>
          <div class="legend"><span class="road"></span></div></li>
        <li><div class="layer selected"><button class="open" aria-label="Collapse"></button><input type="checkbox" id="l2" checked><svg viewBox="0 0 32 34"><use href="#t-poly"/></svg><label for="l2">road_buffer_151</label></div>
          <div class="legend"><span class="swatch c1"></span><span>5.0000 – 10.0000</span></div>
          <div class="legend"><span class="swatch c2"></span><span>10.0000 – 15.0000</span></div>
          <div class="legend"><span class="swatch c3"></span><span>15.0000 – 20.0000</span></div>
          <div class="legend"><span class="swatch c4"></span><span>20.0000 – 25.0000</span></div></li>
        <li><div class="layer"><button class="open" aria-label="Collapse"></button><input type="checkbox" id="l3"><svg viewBox="0 0 32 34"><use href="#t-poly"/></svg><label for="l3">road_buffer_15</label></div>
          <div class="legend"><span class="swatch lilac"></span></div></li>
        <li><div class="layer"><button class="shut" aria-label="Expand"></button><input type="checkbox" id="l4"><svg viewBox="0 0 32 34"><use href="#t-poly"/></svg><label for="l4">buildings_in_danger12</label></div></li>
        <li><div class="layer"><button class="open" aria-label="Collapse"></button><input type="checkbox" id="l5" checked><svg viewBox="0 0 32 34"><use href="#t-poly"/></svg><label for="l5">lesotho_buildings</label></div>
          <div class="legend"><span class="swatch purple"></span></div></li>
        <li><div class="layer"><button class="open" aria-label="Collapse"></button><input type="checkbox" id="l6"><svg viewBox="0 0 32 34"><use href="#t-line"/></svg><label for="l6">leribe_line</label></div>
          <div class="legend"><span class="stroke violet"></span></div></li>
        <li><div class="layer"><button class="open" aria-label="Collapse"></button><input type="checkbox" id="l7"><svg viewBox="0 0 32 34"><use href="#t-poly"/></svg><label for="l7">leribe_river_buffer_300</label></div>
          <div class="legend"><span class="swatch pink"></span></div></li>
        <li><div class="layer"><button class="open" aria-label="Collapse"></button><input type="checkbox" id="l8" checked><svg viewBox="0 0 32 34"><use href="#t-point"/></svg><label for="l8">planet_osm_point</label></div>
          <div class="legend"><span class="dot teal"></span></div></li>
        <li><div class="layer"><button class="open" aria-label="Collapse"></button><input type="checkbox" id="l9" checked><svg viewBox="0 0 32 34"><use href="#t-line"/></svg><label for="l9">planet_osm_line</label></div>
          <div class="legend"><span class="stroke blue"></span></div></li>
        <li><div class="layer"><button class="open" aria-label="Collapse"></button><input type="checkbox" id="l10"><svg viewBox="0 0 32 34"><use href="#t-point"/></svg><label for="l10">planet_osm_point</label></div>
          <div class="legend"><span class="dot rose"></span></div></li>
        <li><div class="layer"><button class="open" aria-label="Collapse"></button><input type="checkbox" id="l11"><svg viewBox="0 0 32 34"><use href="#t-poly"/></svg><label for="l11">planet_osm_polygon</label></div>
          <div class="legend"><span class="swatch brick"></span></div></li>
      </ul>
      <div class="tabs" role="tablist">
        <i></i>
        <div><button role="tab" aria-selected="true">Layers</button><button role="tab" aria-selected="false">Browser</button></div>
        <i></i>
      </div>
    </section>

    <div class="map">
      <svg viewBox="654 260 1896 1068" preserveAspectRatio="xMidYMid slice" role="img" aria-label="Roads, buffers and buildings">
        <g fill="#800080">
          <circle cx="1087.500" cy="354" r="17"/><circle cx="1040.500" cy="597" r="21"/><circle cx="966.500" cy="642.500" r="22.500"/>
          <path d="M1260 301.500L1414.500 352l-3 12L1487 389l-13 42-124.500-40-19.500 63-106-33z"/>
          <path d="M1047.500 448.500l91 36-21 55.500 12 5-16 42-59-23 12-33-44-17z"/>
          <path d="M1018 632l36-1 2 66h-36zM1262.500 598l58 23.500-49.500 124-59-24zM1200 907l35 16-12 33-37-16zM1077 1013l49 20-16 41-48-20zM1219 1073l59 25-38 86-57-25z"/>
        </g>
        <path d="M1244.500 358.500l105 32.500" stroke="#a050a0" stroke-width="1" stroke-dasharray="3 2"/>
        <g fill="none" stroke-linejoin="round">
          <path class="edge" stroke-width="299" d="M1747 200L1682.500 649 1549 1145 1443 1402"/><path stroke="#ffffd4" stroke-width="296" d="M1747 200L1682.500 649 1549 1145 1443 1402"/>
          <path class="edge" stroke-width="180" d="M1747 200L1682.500 649 1549 1145 1443 1402"/><path stroke="#fba377" stroke-width="177" d="M1747 200L1682.500 649 1549 1145 1443 1402"/>
          <path class="edge" stroke-width="120" d="M1747 200L1682.500 649 1549 1145 1443 1402"/><path stroke="#d9494b" stroke-width="117" d="M1747 200L1682.500 649 1549 1145 1443 1402"/>
          <path class="edge" stroke-width="61" d="M1747 200L1682.500 649 1549 1145 1443 1402"/><path stroke="#c82034" stroke-width="58" d="M1747 200L1682.500 649 1549 1145 1443 1402"/>
          <path stroke="#000" stroke-width="17.500" d="M1747 200L1682.500 649 1549 1145 1443 1402"/>
          <path stroke="#fff" stroke-width="8.500" stroke-linecap="round" stroke-dasharray="36 17" stroke-dashoffset="36" d="M1738.400 260L1682.500 649 1549 1145 1443 1402"/>
        </g>
      </svg>
    </div>
  </main>

  <footer>
    <p>Toggles the editing state of the current layer</p>
    <button aria-label="Toggle extents and mouse position"><svg viewBox="0 0 36 36"><path d="M5 14C7 5 12 2 16 4s3 9 1 17c-5 3-12 0-12-7z" fill="#fff" stroke="#222" stroke-width="3"/><path d="M11 3v18M5 13h13" stroke="#222" stroke-width="2.400"/><circle cx="21" cy="25" r="8" fill="#fff" stroke="#222" stroke-width="3"/><circle cx="21" cy="25" r="2.500" fill="#222"/><path d="M24 9l3-4M29 7l4-3M3 22l9 6" stroke="#333" stroke-width="2.400"/></svg></button>
    <label for="coord">Coordinate:</label>
    <input id="coord" type="text" value="3123793.5,–3357560.5">
    <label class="sm" for="scale">Scale</label>
    <span class="combo"><select id="scale"><option>1:957</option></select></span>
    <span class="render"><input type="checkbox" id="render" checked><label class="sm" for="render">Render</label></span>
    <span class="sm epsg">EPSG:3857</span>
    <button class="crs" aria-label="CRS status"><svg viewBox="0 0 36 32"><circle cx="18" cy="16" r="12" fill="#999" stroke="#222" stroke-width="5"/><ellipse cx="18" cy="16" rx="6" ry="12" fill="none" stroke="#222" stroke-width="2.400"/><path d="M5 11h26M5 21h26M18 0v32M2 16h32" stroke="#222" stroke-width="2.400"/><rect x="14" y="12" width="8" height="8" fill="#fff"/></svg></button>
    <button aria-label="Messages"><svg viewBox="0 0 36 36"><path d="M18 6l12 25H6z" fill="#f7f7b4" stroke="#8d8d80" stroke-width="2" stroke-linejoin="round"/><path d="M18 13v9M18 25v4" stroke="#333" stroke-width="3.500"/></svg></button>
    <svg class="sizer" viewBox="0 0 24 24"><path d="M2 23L22 3M9 23L22 10M16 23l6-6" stroke="#777" stroke-width="2"/></svg>
  </footer>
</div>
</body>
</html>
```
FILE: styles.css
```css
* { box-sizing: border-box; }
html { background: #3f524d; }
body { margin: 0; font-family: "DejaVu Sans", Verdana, sans-serif; font-size: 25px; line-height: 32px; color: #000; }
button { margin: 0; padding: 0; border: 0; background: none; font: inherit; color: inherit; }
svg { display: block; }
.defs { position: absolute; width: 0; height: 0; }
h1, h2, p, ul { margin: 0; padding: 0; font-weight: normal; font-size: inherit; }

.window { display: flex; flex-direction: column; min-height: 100vh; background: #ececec; border-radius: 8px; overflow: hidden; }

.titlebar { display: grid; grid-template-columns: 1fr auto 1fr; align-items: center; height: 42px; background: linear-gradient(#e6e6e6, #b2b2b2); border-bottom: 2px solid #6a6a6a; }
.titlebar h1 { color: #3a3a3a; font-size: 26px; }
.lights { display: flex; gap: 16px; padding-left: 16px; }
.light { width: 24px; height: 24px; border-radius: 50%; border: 2px solid; }
.light.close { background: radial-gradient(circle at 50% 15%, #fff 0 10%, #ff4e50 35%, #ff4e50 55%, #ffb4b4 90%); border-color: #7d3030; }
.light.mini { background: radial-gradient(circle at 50% 15%, #fff 0 10%, #f6a63c 35%, #f8bc58 55%, #ffe69a 90%); border-color: #8b5f2a; }
.light.full { background: radial-gradient(circle at 50% 15%, #fff 0 10%, #7fc25c 35%, #93cf72 55%, #cdf0b0 90%); border-color: #47703a; }

.toolbar { display: flex; height: 72px; border-top: 2px solid #fff; border-bottom: 2px solid #afafaf; background: linear-gradient(#ededed, #c8c8c8); padding-left: 2px; }
.toolbar button { flex: none; width: 76px; display: flex; align-items: center; justify-content: center; }
.toolbar button svg { width: 48px; height: 48px; overflow: visible; }
.toolbar .pressed { background: linear-gradient(90deg, #8e8e8e, transparent 4%, transparent 96%, #8e8e8e), linear-gradient(#d0d0d0, #a2a2a2 50%, #b0b0b0); background-clip: content-box; padding: 0 4px; }
.toolbar .drop { width: 100px; justify-content: flex-start; padding-left: 26px; gap: 4px; }
.toolbar button:disabled svg { opacity: .5; }
.toolbar .soft:disabled svg, .toolbar .soft svg { opacity: .65; }
.toolbar .off:disabled svg { opacity: .45; }

.arrow { width: 16px; height: 15px; background: #6a6a6a; clip-path: polygon(0 0, 100% 0, 50% 100%); }
.drop .arrow { margin-top: 20px; }
.arrow.small { height: 10px; width: 14px; }
.corner { position: relative; }
.toolbar .corner .arrow { position: absolute; right: 11px; bottom: 12px; background: #8a8a8a; }
.sidebar .corner .arrow { position: absolute; right: 3px; bottom: 18px; }

.grip { flex: none; width: 18px; position: relative; }
.grip::after { content: ""; position: absolute; left: 12px; top: 10px; width: 12px; height: 48px;
  background: radial-gradient(circle at 3px 3px, #f8f8f8 2px, transparent 3px), radial-gradient(circle at 9px 9px, #f8f8f8 2px, transparent 3px);
  background-size: 12px 12px; filter: drop-shadow(1px 1px 0 #b5b5b5); }
.sep { flex: none; width: 20px; margin: 2px 0 4px; background: repeating-linear-gradient(#777 0 2px, transparent 2px 6px) center / 2px 100% no-repeat; }

.glyph { font-family: "DejaVu Sans Condensed", "DejaVu Sans", sans-serif; font-weight: bold; text-anchor: middle; }
.glyph.ess { font-size: 17px; fill: #b3b09a; }
.glyph.serif, .glyph.info { font-family: "DejaVu Serif", serif; font-weight: normal; }
.glyph.info { font-weight: bold; font-style: italic; }
.glyph.thin { font-weight: normal; }
.node { fill: #cfe4f5; stroke: #2f6a92; stroke-width: 2.6px; }
.node.red { fill: #ffd9d9; stroke: #ff1010; }
.node.lt { fill: #d8ecfb; stroke: #5aa5dc; }
.ln { fill: none; stroke: #2f6380; stroke-width: 2px; }
.ln.lred { stroke: #ff1010; }
.ln.llt { stroke: #5aa0d4; }

main { flex: 1; display: flex; }
.sidebar { flex: none; width: 98px; padding-right: 2px; display: flex; flex-direction: column; align-items: stretch; background: linear-gradient(90deg, #f2f2f2, #c6c6c6); border-top: 2px solid #fff; border-left: 2px solid #fff; border-right: 2px solid #aaa; }
.sidebar button { flex: none; height: 76px; display: flex; align-items: center; padding-left: 22px; }
.sidebar button svg { width: 48px; height: 48px; }
.sidebar .grip { width: auto; height: 18px; }
.sidebar .grip::after { left: 13px; top: 10px; width: 72px; height: 12px; }

.dock { flex: none; width: 552px; display: flex; flex-direction: column; }
.dock header { display: flex; align-items: center; gap: 12px; height: 54px; padding: 0 10px 4px 4px; background: linear-gradient(#efefef, #c8c8c8); border-top: 2px solid #fff; border-bottom: 3px solid #8f8f8f; }
.dock header svg { width: 28px; height: 28px; }
.dock h2 { flex: 1; text-align: center; font-size: 20px; padding-top: 4px; }
.tree { flex: 1; list-style: none; background: #fff; border-right: 2px solid #b2b2b2; border-bottom: 2px solid #b2b2b2; }
.layer { display: flex; align-items: center; height: 40px; padding-left: 10px; font-weight: bold; font-size: 24px; }
.layer label { padding-top: 3px; }
.layer button { width: 20px; height: 16px; background: #868686; clip-path: polygon(6% 6%, 94% 6%, 50% 94%); }
.layer button.shut { clip-path: polygon(12% 0, 90% 50%, 12% 100%); height: 20px; }
.layer input { margin: 0 26px 0 24px; }
.layer > svg { width: 32px; height: 34px; margin-right: 13px; }
.layer.selected { background: #3874d8; color: #fff; }
.layer.selected label { text-decoration: underline; text-decoration-thickness: 2px; }
.legend { display: flex; align-items: center; height: 36px; padding-left: 90px; gap: 13px; font-size: 26px; }
.legend span + span { padding-top: 2px; }
.swatch { width: 32px; height: 32px; border: 2px solid; }
.c1 { background: #dc7389; border-color: #b25e70; }
.c2 { background: #fba387; border-color: #c9836d; }
.c3 { background: #ffd69d; border-color: #ccab7e; }
.c4 { background: #ffffd4; border-color: #cfcfa9; }
.lilac { background: #c6c1ea; border-color: #c6c1ea; }
.purple { background: #890f88; border-color: #890f88; }
.pink { background: #f39595; border-color: #f39595; }
.brick { background: #ae2629; border-color: #7a1719; }
.road { width: 32px; height: 20px; border: solid #000; border-width: 5px 0; }
.stroke { width: 32px; height: 2px; }
.violet { height: 4px; background: #a794c4; }
.blue { background: #4a6db0; }
.dot { width: 12px; height: 12px; margin-left: 10px; border-radius: 50%; border: 2px solid #2a2a30; }
.teal { background: #5d8299; }
.rose { background: #e6a3cd; }

input[type="checkbox"] { appearance: none; position: relative; width: 28px; height: 28px; border: 2px solid #a0a0a0; border-radius: 6px; background: linear-gradient(#fff, #fff 45%, #ededed 50%, #fafafa); }
input[type="checkbox"]:checked { border-color: #4d62a0; background: linear-gradient(#eaf5ff, #aad2f7 50%, #86c4f8 55%, #c9edff); }
input[type="checkbox"]:checked::after { content: ""; position: absolute; left: 3px; top: -7px; width: 26px; height: 26px; background: #0d1f38; clip-path: polygon(6% 50%, 18% 42%, 36% 66%, 84% 0, 98% 4%, 42% 98%, 32% 98%); }

.tabs { display: flex; height: 42px; padding-right: 2px; }
.tabs i { flex: 1; height: 22px; background: #e4e4e4; border-bottom: 1px solid #d2d2d2; }
.tabs i:first-child { border-bottom-left-radius: 8px; }
.tabs i:last-child { border-bottom-right-radius: 8px; }
.tabs div { display: flex; width: 270px; border: 2px solid #8f8f8f; border-radius: 8px; overflow: hidden; margin: 0 4px; }
.tabs button { font-size: 24px; line-height: 36px; flex: 1; padding-top: 2px; background: linear-gradient(#fff, #f0f0f0 50%, #fff); }
.tabs button[aria-selected="true"] { flex: 0 0 124px; color: #fff; background: linear-gradient(#777, #8d8d8d 20%, #979797); border-right: 2px solid #666; }

.map { flex: 1; min-width: 0; position: relative; background: #fff; border: 2px solid #8f8f8f; border-left: 4px solid #9a9a9a; border-right-color: #b0b0b0; border-bottom-color: #b0b0b0; overflow: hidden; }
.map > svg { position: absolute; width: 100%; height: 100%; }
.edge { stroke: #4c4c44; stroke-opacity: .7; }

footer { display: flex; align-items: center; height: 64px; padding: 0 0 0 12px; }
footer p { flex: 1; padding-top: 2px; }
footer button { width: 40px; height: 40px; border: 2px solid #989898; background: linear-gradient(#fff, #ebebeb); }
footer button.crs { height: 36px; margin: 0 12px 0 20px; }
footer label, .epsg { padding-top: 2px; }
footer label[for="coord"] { margin: 0 20px 0 18px; }
footer input[type="text"] { width: 600px; height: 40px; border: 2px solid #9d9d9d; box-shadow: inset 0 2px 0 #d4d4d4; font: inherit; font-size: 26px; text-align: center; padding: 2px 6px 0 0; }
.sm { font-size: 24px; }
footer label[for="scale"] { margin: 0 26px 0 18px; }
.combo { position: relative; width: 188px; height: 30px; margin: 6px 12px 0 0; }
.combo select { appearance: none; display: block; width: 100%; height: 30px; border: 2px solid #a0a0a0; border-radius: 0 8px 8px 0; background: #fff; font: inherit; font-size: 24px; line-height: 26px; padding: 0 0 0 5px; color: #000; }
.combo::before { content: ""; position: absolute; right: 2px; top: 2px; width: 26px; height: 26px; border-left: 2px solid #b5b5b5; border-radius: 0 6px 6px 0; background: linear-gradient(#fff, #ededed); pointer-events: none; }
.combo::after { content: ""; position: absolute; right: 11px; top: 12px; width: 10px; height: 8px; background: #555; clip-path: polygon(0 0, 100% 0, 50% 100%); pointer-events: none; }
.render { display: flex; align-items: center; gap: 8px; margin-right: 14px; }
.render input { margin: 0; }
.sizer { width: 24px; height: 24px; margin: 36px 2px 0 27px; }
```
